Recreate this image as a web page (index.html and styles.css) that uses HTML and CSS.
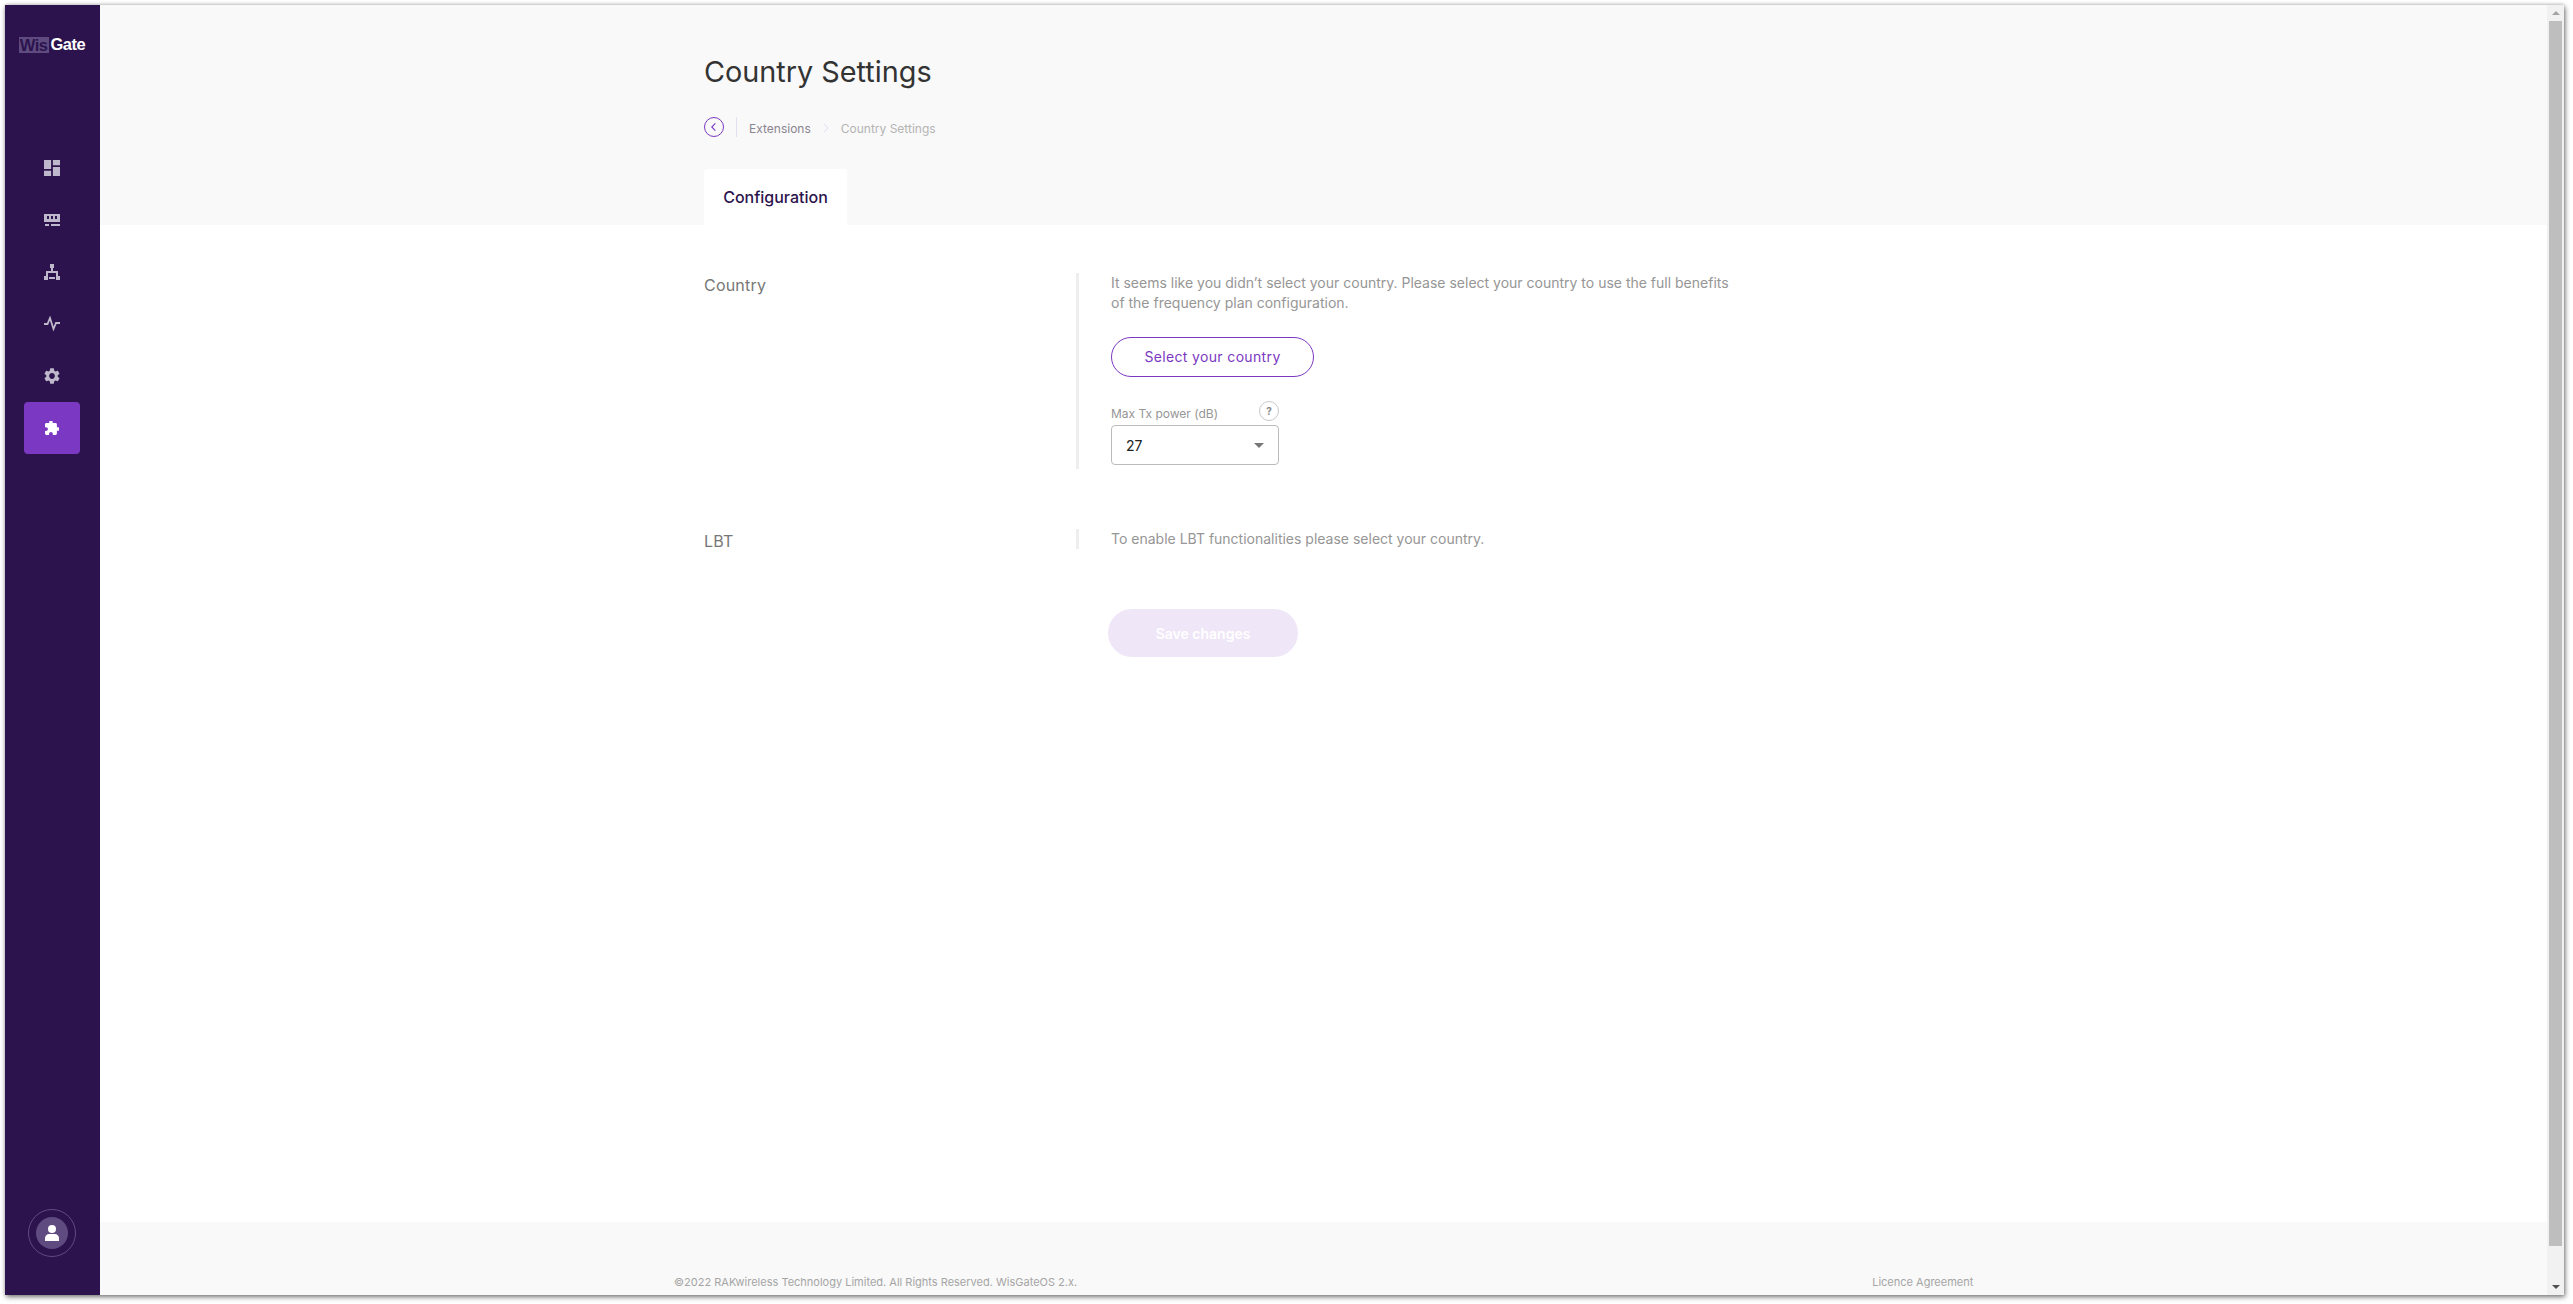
FILE: index.html
```html
<!DOCTYPE html>
<html>
<head>
  <meta charset="UTF-8">
  <title>Country Settings</title>
  <link rel="stylesheet" href="styles.css">
</head>
<body>
  <div class="window">
    <nav class="sidebar">
      <div class="logo"><span class="logo-wis">Wis</span><span class="logo-gate">Gate</span></div>
      <ul class="menu">
        <li class="menu-item">
          <svg class="icon" viewBox="3 3 18 18"><path d="M3 13h8V3H3v10zm0 8h8v-6H3v6zm10 0h8V11h-8v10zm0-18v6h8V3h-8z"/></svg>
        </li>
        <li class="menu-item">
          <svg class="icon" viewBox="0 0 16 16"><path fill-rule="evenodd" d="M0 2h16v8H0V2zm3 2v3h2V4H3zm4 0v3h2V4H7zm4 0v3h2V4h-2zM1 12h4v2H1v-2zm6 0h9v2H7v-2z"/></svg>
        </li>
        <li class="menu-item">
          <svg class="icon" viewBox="0 0 16 16"><path d="M6 0h4v4H6V0zM0 12h4v4H0v-4zm12 0h4v4h-4v-4zM5 13h6v2H5v-2zM7 4h2v3h5v5h-2V9H4v3H2V7h5V4z"/></svg>
        </li>
        <li class="menu-item">
          <svg class="icon" viewBox="0 0 16 16"><path class="icon-line" d="M0 8h3.5L6 2l3.5 11 2.5-6h4"/></svg>
        </li>
        <li class="menu-item">
          <svg class="icon" viewBox="2.2 2 19.6 20"><path d="M19.14 12.94c.04-.3.06-.61.06-.94 0-.32-.02-.64-.07-.94l2.03-1.58c.18-.14.23-.41.12-.61l-1.92-3.32c-.12-.22-.37-.29-.59-.22l-2.39.96c-.5-.38-1.03-.7-1.62-.94l-.36-2.54c-.04-.24-.24-.41-.48-.41h-3.84c-.24 0-.43.17-.47.41l-.36 2.54c-.59.24-1.13.57-1.62.94l-2.39-.96c-.22-.08-.47 0-.59.22L2.74 8.87c-.12.21-.08.47.12.61l2.03 1.58c-.05.3-.09.63-.09.94s.02.64.07.94l-2.03 1.58c-.18.14-.23.41-.12.61l1.92 3.32c.12.22.37.29.59.22l2.39-.96c.5.38 1.03.7 1.62.94l.36 2.54c.05.24.24.41.48.41h3.84c.24 0 .44-.17.47-.41l.36-2.54c.59-.24 1.13-.56 1.62-.94l2.39.96c.22.08.47 0 .59-.22l1.92-3.32c.12-.22.07-.47-.12-.61l-2.01-1.58zM12 15.6c-1.98 0-3.6-1.62-3.6-3.6s1.62-3.6 3.6-3.6 3.6 1.62 3.6 3.6-1.62 3.6-3.6 3.6z"/></svg>
        </li>
        <li class="menu-item menu-item-active">
          <svg class="icon" viewBox="2 2 20 20"><path d="M20.5 11H19V7c0-1.1-.9-2-2-2h-4V3.5C13 2.12 11.88 1 10.5 1S8 2.12 8 3.5V5H4c-1.1 0-1.99.9-1.99 2v3.8H3.5c1.49 0 2.7 1.21 2.7 2.7s-1.21 2.7-2.7 2.7H2V20c0 1.1.9 2 2 2h3.8v-1.5c0-1.49 1.21-2.7 2.7-2.7 1.49 0 2.7 1.21 2.7 2.7V22H17c1.1 0 2-.9 2-2v-4h1.5c1.38 0 2.5-1.12 2.5-2.5S21.88 11 20.5 11z"/></svg>
        </li>
      </ul>
      <div class="avatar">
        <div class="avatar-inner">
          <svg class="avatar-icon" viewBox="0 0 14 16"><circle cx="7" cy="4" r="4"/><path d="M0 16v-3c0-2 2-4 4-4h6c2 0 4 2 4 4v3H0z"/></svg>
        </div>
      </div>
    </nav>

    <div class="page">
      <header class="page-header">
        <div class="wrap">
          <h1>Country Settings</h1>
          <div class="breadcrumb">
            <span class="back">
              <svg viewBox="0 0 20 20"><path d="M11.5 6l-4 4 4 4"/></svg>
            </span>
            <span class="crumb-sep"></span>
            <span class="crumb">Extensions</span>
            <svg class="crumb-arrow" viewBox="0 0 6 10"><path d="M1 1l4 4-4 4"/></svg>
            <span class="crumb crumb-current">Country Settings</span>
          </div>
          <div class="tab">Configuration</div>
        </div>
      </header>

      <main class="content">
        <div class="wrap">
          <section class="row row-country">
            <div class="row-label">Country</div>
            <div class="row-body">
              <p class="hint">It seems like you didn’t select your country. Please select your country to use the full benefits of the frequency plan configuration.</p>
              <button class="btn-outline">Select your country</button>
              <div class="field">
                <div class="field-head">
                  <label>Max Tx power (dB)</label>
                  <span class="help">?</span>
                </div>
                <div class="select">
                  <span>27</span>
                  <span class="caret"></span>
                </div>
              </div>
            </div>
          </section>
          <section class="row row-lbt">
            <div class="row-label">LBT</div>
            <div class="row-body">
              <p class="hint">To enable LBT functionalities please select your country.</p>
            </div>
          </section>
          <button class="btn-save">Save changes</button>
        </div>
      </main>

      <footer class="footer">
        <span>©2022 RAKwireless Technology Limited. All Rights Reserved. WisGateOS 2.x.</span>
        <span>Licence Agreement</span>
      </footer>
    </div>

    <div class="scrollbar">
      <span class="arrow arrow-up"></span>
      <div class="thumb"></div>
      <span class="arrow arrow-down"></span>
    </div>
  </div>
</body>
</html>
```

FILE: styles.css
```css
* {
  box-sizing: border-box;
  font-family: Inter, sans-serif;
}
html,
body {
  height: 100%;
  margin: 0;
  background: #fff;
  overflow: hidden;
}
body {
  padding: 5px 9px 9px 5px;
}
.window {
  display: flex;
  height: 1290px;
  background: #fff;
  box-shadow: 1px 2px 5px rgba(0, 0, 0, 0.55), 0 -1px 3px rgba(0, 0, 0, 0.15);
}

/* sidebar */
.sidebar {
  width: 95px;
  flex: none;
  display: flex;
  flex-direction: column;
  align-items: center;
  padding-right: 1px;
  background: #2c134d;
}
.logo {
  display: flex;
  align-items: center;
  margin-top: 31px;
  height: 17px;
  font-family: "Liberation Sans", sans-serif;
  font-size: 16.5px;
  letter-spacing: -0.5px;
}
.logo-wis {
  padding: 0 1px;
  background: #5f4b80;
  color: #2c134d;
  font-family: inherit;
  font-weight: 700;
  line-height: 16px;
  margin-right: 2px;
}
.logo-gate {
  color: #fff;
  font-family: inherit;
  font-weight: 700;
}
.menu {
  list-style: none;
  margin: 89px 0 0;
  padding: 0;
}
.menu-item {
  width: 56px;
  height: 52px;
  display: flex;
  align-items: center;
  justify-content: center;
  border-radius: 4px;
}
.menu-item-active {
  background: #7b38c2;
}
.icon {
  width: 16px;
  height: 16px;
  fill: #bfb7cb;
}
.icon-line {
  fill: none;
  stroke: #bfb7cb;
  stroke-width: 1.8;
}
.menu-item-active .icon {
  width: 14px;
  height: 14px;
  fill: #fff;
}
.avatar {
  width: 48px;
  height: 48px;
  margin-top: auto;
  margin-bottom: 38px;
  padding: 7px;
  border: 1px solid #5f4b80;
  border-radius: 50%;
}
.avatar-inner {
  width: 32px;
  height: 32px;
  display: flex;
  align-items: center;
  justify-content: center;
  border-radius: 50%;
  background: #5f4b80;
}
.avatar-icon {
  width: 14px;
  height: 16px;
  fill: #fff;
}

/* page */
.page {
  flex: 1;
  display: flex;
  flex-direction: column;
}
.wrap {
  padding-left: 604px;
}
.page-header {
  height: 220px;
  background: #f9f9f9;
}
h1 {
  margin: 0;
  padding-top: 49px;
  font-size: 28.8px;
  font-weight: 400;
  line-height: 36px;
  color: #333;
}
.breadcrumb {
  display: flex;
  align-items: center;
  height: 20px;
  margin-top: 27px;
  font-size: 12px;
}
.back {
  width: 20px;
  height: 20px;
  flex: none;
}
.back svg {
  display: block;
  fill: none;
  stroke: #7b38c2;
  stroke-width: 1.2;
  border: 1px solid #7b38c2;
  border-radius: 50%;
}
.crumb-sep {
  width: 1px;
  height: 20px;
  margin: 0 12px;
  background: #e5e0f0;
}
.crumb {
  color: #8a858f;
  padding-top: 2px;
}
.crumb-current {
  color: #b4b4b4;
}
.crumb-arrow {
  width: 6px;
  height: 10px;
  margin: 2px 12px 0 12px;
  fill: none;
  stroke: #e2dcf2;
  stroke-width: 1;
}
.tab {
  width: 143px;
  height: 56px;
  margin-top: 32px;
  background: #fff;
  border-radius: 4px 4px 0 0;
  font-size: 16px;
  font-weight: 500;
  line-height: 56px;
  text-align: center;
  color: #2c134d;
}

/* content */
.content {
  flex: 1;
  padding-top: 48px;
}
.row {
  display: flex;
}
.row-label {
  width: 372px;
  font-size: 16px;
  line-height: 20px;
  color: #777;
  padding-top: 2px;
  letter-spacing: 0.2px;
}
.row-body {
  width: 680px;
  padding-left: 32px;
  border-left: 3px solid #eee;
}
.row-country .row-body {
  height: 196px;
}
.row-lbt {
  margin-top: 60px;
}
.row-lbt .row-body {
  height: 20px;
}
.hint {
  max-width: 625px;
  margin: 0;
  font-size: 14px;
  line-height: 20px;
  color: #969696;
}
.btn-outline {
  display: block;
  width: 203px;
  height: 40px;
  margin-top: 24px;
  padding: 0 0 1px;
  background: #fff;
  border: 1px solid #7b38c2;
  border-radius: 20px;
  font-size: 14px;
  color: #7b38c2;
  letter-spacing: 0.35px;
}
.field {
  width: 168px;
  margin-top: 21px;
}
.field-head {
  display: flex;
  align-items: center;
  justify-content: space-between;
  height: 27px;
}
.field-head label {
  font-size: 12px;
  color: #969696;
  padding-top: 4px;
}
.help {
  width: 20px;
  height: 20px;
  margin-bottom: 2px;
  border: 1px solid #c8c8c8;
  border-radius: 50%;
  font-size: 10px;
  font-weight: 700;
  line-height: 18px;
  text-align: center;
  color: #888;
}
.select {
  display: flex;
  align-items: center;
  justify-content: space-between;
  height: 40px;
  padding: 0 14px;
  border: 1px solid #bbb;
  border-radius: 4px;
  font-size: 14px;
  color: #222;
}
.caret {
  width: 0;
  height: 0;
  border-left: 5px solid transparent;
  border-right: 5px solid transparent;
  border-top: 5px solid #777;
}
.btn-save {
  display: block;
  width: 190px;
  height: 48px;
  margin: 58px 0 0 404px;
  padding: 0;
  background: #efe6f7;
  border: 0;
  border-radius: 24px;
  font-size: 14px;
  font-weight: 600;
  color: #fff;
}

/* footer */
.footer {
  height: 73px;
  display: flex;
  align-items: flex-end;
  padding: 0 0 5px 574px;
  background: #f9f9f9;
  font-size: 11px;
  line-height: 16px;
  color: #a5a5a5;
}
.footer span:last-child {
  margin-left: 795px;
}

/* scrollbar */
.scrollbar {
  width: 17px;
  flex: none;
  display: flex;
  flex-direction: column;
  align-items: center;
  background: #f1f1f1;
}
.thumb {
  width: 13px;
  height: 1225px;
  background: #bebebe;
}
.arrow {
  width: 0;
  height: 0;
  margin: 6px 0;
  border-left: 4px solid transparent;
  border-right: 4px solid transparent;
}
.arrow-up {
  border-bottom: 4px solid #a3a3a3;
}
.arrow-down {
  margin-top: auto;
  border-top: 4px solid #505050;
}
```
